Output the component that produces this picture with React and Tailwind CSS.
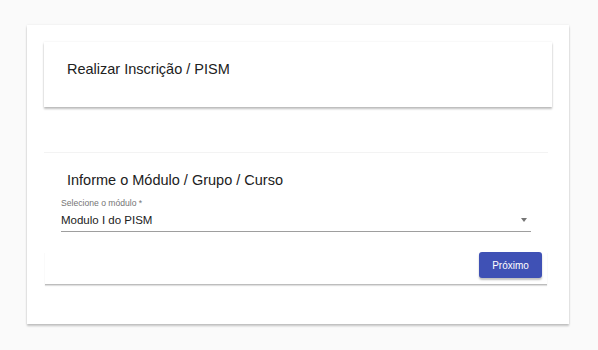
import React from 'react';

export default function App() {
  return (
    <div className="min-h-[350px] w-[598px] bg-[#fafafa] pt-[25px] pl-[27px] font-['Liberation_Sans',Arial,sans-serif]">
      {/* Outer card */}
      <div className="w-[542px] h-[299px] bg-white shadow-[0_2px_2px_rgba(0,0,0,0.22),0_0_2px_rgba(0,0,0,0.08)] pt-[17px] pl-[17px] flex flex-col">
        {/* Header card */}
        <div className="w-[508px] h-[65px] bg-white shadow-[0_2px_2px_rgba(0,0,0,0.25),0_0_2px_rgba(0,0,0,0.08)] pl-[23px] pt-[17px]">
          <h1 className="text-[14.5px] leading-[20px] text-[#212121]">Realizar Inscrição / PISM</h1>
        </div>

        <div className="mt-[45px] h-px w-[504px] bg-[#f3f3f3]" />

        {/* Form section */}
        <div className="w-[504px] flex flex-col">
          <h2 className="mt-[17px] ml-[23px] text-[14.5px] leading-[20px] text-[#212121]">
            Informe o Módulo / Grupo / Curso
          </h2>
          <div className="ml-[17px] mt-[8px] w-[470px]">
            <div className="text-[8.6px] leading-[10px] text-[#757575]">Selecione o módulo *</div>
            <div className="flex items-start justify-between h-[24px] pt-[5px] border-b border-[#9e9e9e]">
              <span className="text-[11.5px] leading-[14px] text-[#212121]">Modulo I do PISM</span>
              <span className="mt-[5px] mr-[4px] w-0 h-0 border-l-[3px] border-r-[3px] border-t-[4px] border-l-transparent border-r-transparent border-t-[#757575]" />
            </div>
          </div>
          <div className="mt-[20px] flex justify-end pr-[5px] pb-[6px] border-b border-[#bdbdbd] shadow-[0_1px_1px_rgba(0,0,0,0.12)] ml-[1px] w-[502px]">
            <button className="w-[63px] h-[26px] rounded-[3px] bg-[#3f51b5] text-white text-[10px] shadow-[0_2px_2px_rgba(0,0,0,0.25)]">
              Próximo
            </button>
          </div>
        </div>
      </div>
    </div>
  );
}
